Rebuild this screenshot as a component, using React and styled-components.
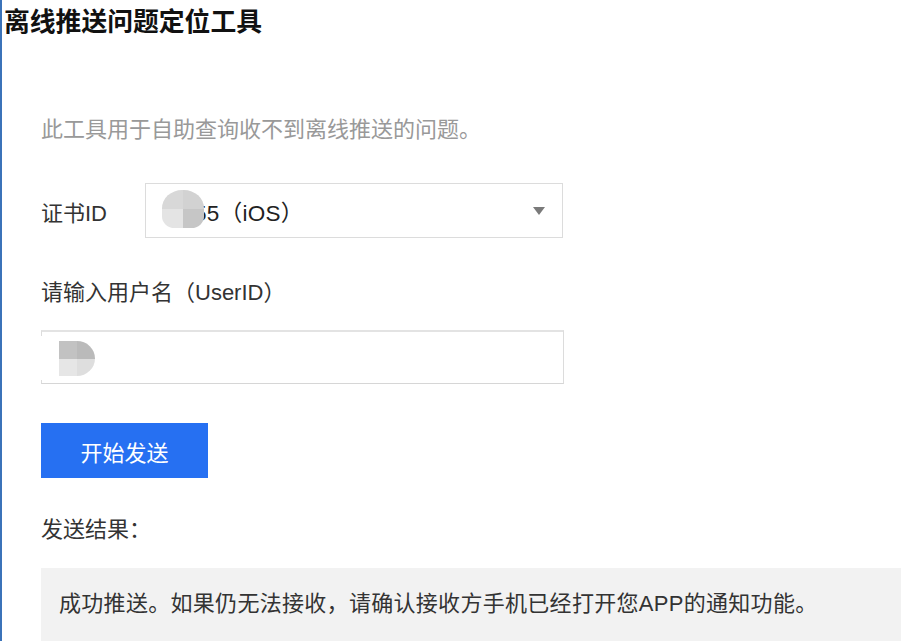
import React from 'react';
import styled, { createGlobalStyle } from 'styled-components';

const GlobalStyle = createGlobalStyle`
  html, body {
    margin: 0;
    padding: 0;
    background: #fff;
  }
  body {
    font-family: "Liberation Sans", "Noto Sans CJK SC", sans-serif;
  }
`;

const Page = styled.div`
  width: 901px;
  height: 641px;
  box-sizing: border-box;
  border-left: 2px solid #3b73b9;
  overflow: hidden;
  background: #fff;
`;

const Title = styled.h1`
  margin: 0;
  padding-left: 2px;
  font-size: 25.8px;
  line-height: 44px;
  font-weight: 700;
  color: #111;
`;

const Content = styled.div`
  padding-left: 39px;
  display: flex;
  flex-direction: column;
  align-items: flex-start;
`;

const Text = styled.div`
  font-size: 22px;
  line-height: 30px;
  color: ${(p) => p.$color || '#333'};
  margin-top: ${(p) => p.$top || 0}px;
`;

const FieldRow = styled.div`
  display: flex;
  align-items: center;
  margin-top: 38px;
  height: 55px;
`;

const FieldLabel = styled.span`
  width: 104px;
  font-size: 22px;
  color: #333;
`;

const Select = styled.div`
  position: relative;
  box-sizing: border-box;
  width: 418px;
  height: 55px;
  border: 1px solid #dcdcdc;
  display: flex;
  align-items: center;
  justify-content: space-between;
  padding: 0 17px 0 18px;
  font-size: 22.5px;
  color: #222;
`;

const Value = styled.span`
  position: relative;
  padding-left: 30px;
  letter-spacing: 0.3px;
`;

const Arrow = styled.span`
  width: 0;
  height: 0;
  border-left: 6px solid transparent;
  border-right: 6px solid transparent;
  border-top: 8px solid #7a7a7a;
`;

const Input = styled.div`
  position: relative;
  box-sizing: border-box;
  width: 523px;
  height: 54px;
  margin-top: 22px;
  border-style: solid;
  border-width: 2px 1px 1px 1px;
  border-color: #e3e3e3 #dcdcdc #d6d6d6 #dcdcdc;
`;

/* pixelated blur patch covering part of the value */
const Mosaic = styled.span`
  position: absolute;
  left: ${(p) => p.$left}px;
  top: ${(p) => p.$top}px;
  width: ${(p) => p.$w}px;
  height: ${(p) => p.$h}px;
  display: grid;
  grid-template-columns: 1fr 1fr;
  grid-template-rows: 1fr 1fr;
  border-radius: ${(p) => p.$radius || '0'};
  overflow: hidden;
`;

const Cell = styled.span`
  background: ${(p) => p.$c};
`;

const Fade = styled.span`
  position: absolute;
  left: -12px;
  top: 4px;
  width: 28px;
  height: 44px;
  background: #fff;
  border-radius: 0 50% 50% 0;
`;

const Button = styled.button`
  margin-top: 39px;
  width: 167px;
  height: 55px;
  border: none;
  background: #2670f2;
  color: #fff;
  font-family: inherit;
  font-size: 22px;
  padding: 0;
`;

const ResultBox = styled.div`
  align-self: stretch;
  margin-top: 23px;
  background: #f2f2f2;
  padding: 21px 18px 40px;
  font-size: 22px;
  line-height: 30px;
  letter-spacing: 0.3px;
  color: #333;
`;

export default function App() {
  return (
    <Page>
      <GlobalStyle />
      <Title>离线推送问题定位工具</Title>
      <Content>
        <Text $color="#999" $top={71}>此工具用于自助查询收不到离线推送的问题。</Text>
        <FieldRow>
          <FieldLabel>证书ID</FieldLabel>
          <Select>
            <Value>
              55（iOS）
              <Mosaic $left={-2} $top={-5} $w={42} $h={38} $radius="48% 48% 30% 30%">
                <Cell $c="#d8d8d8" />
                <Cell $c="#d2d2d2" />
                <Cell $c="#e4e4e4" />
                <Cell $c="#c6c6c6" />
              </Mosaic>
            </Value>
            <Arrow />
          </Select>
        </FieldRow>
        <Text $top={40}>请输入用户名（UserID）</Text>
        <Input>
          <Fade />
          <Mosaic $left={17} $top={9} $w={36} $h={35} $radius="0 50% 50% 0">
            <Cell $c="#c2c2c2" />
            <Cell $c="#bababa" />
            <Cell $c="#e6e6e6" />
            <Cell $c="#dedede" />
          </Mosaic>
        </Input>
        <Button>开始发送</Button>
        <Text $top={37}>发送结果：</Text>
        <ResultBox>成功推送。如果仍无法接收，请确认接收方手机已经打开您APP的通知功能。</ResultBox>
      </Content>
    </Page>
  );
}
